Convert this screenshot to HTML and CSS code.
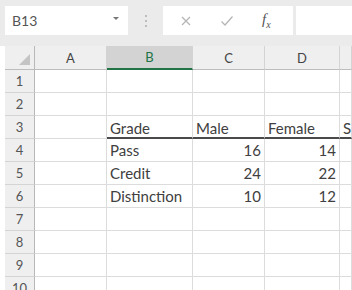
FILE: index.html
```html
<!DOCTYPE html>
<html lang="en">
<head>
  <meta charset="UTF-8" />
  <title>Grades</title>
  <link rel="stylesheet" href="styles.css">
</head>
<body>
  <div class="toolbar">
    <div class="name-box">
      <span>B13</span>
      <span class="arrow"></span>
    </div>
    <div class="grip"><i></i><i></i><i></i></div>
    <div class="fx-box">
      <svg class="ico" width="12" height="12" viewBox="0 0 12 12"><path d="M2 2 L10 10 M10 2 L2 10" stroke="#b4b4b4" stroke-width="1.2" fill="none"/></svg>
      <svg class="ico" width="14" height="12" viewBox="0 0 14 12"><path d="M1.5 6.5 L5 10 L12.5 1.5" stroke="#b4b4b4" stroke-width="1.2" fill="none"/></svg>
      <span class="fx">f<sub>x</sub></span>
    </div>
    <div class="formula"></div>
  </div>

  <div class="grid">
    <div class="corner"><span class="tri"></span></div>
    <div class="col">A</div>
    <div class="col sel">B</div>
    <div class="col">C</div>
    <div class="col">D</div>
    <div class="col"></div>

    <div class="row">1</div><div class="c"></div><div class="c"></div><div class="c"></div><div class="c"></div><div class="c"></div>
    <div class="row">2</div><div class="c"></div><div class="c"></div><div class="c"></div><div class="c"></div><div class="c"></div>
    <div class="row">3</div><div class="c"></div><div class="c head">Grade</div><div class="c head">Male</div><div class="c head">Female</div><div class="c head">Sum</div>
    <div class="row">4</div><div class="c"></div><div class="c">Pass</div><div class="c num">16</div><div class="c num">14</div><div class="c"></div>
    <div class="row">5</div><div class="c"></div><div class="c">Credit</div><div class="c num">24</div><div class="c num">22</div><div class="c"></div>
    <div class="row">6</div><div class="c"></div><div class="c">Distinction</div><div class="c num">10</div><div class="c num">12</div><div class="c"></div>
    <div class="row">7</div><div class="c"></div><div class="c"></div><div class="c"></div><div class="c"></div><div class="c"></div>
    <div class="row">8</div><div class="c"></div><div class="c"></div><div class="c"></div><div class="c"></div><div class="c"></div>
    <div class="row">9</div><div class="c"></div><div class="c"></div><div class="c"></div><div class="c"></div><div class="c"></div>
    <div class="row">10</div><div class="c"></div><div class="c"></div><div class="c"></div><div class="c"></div><div class="c"></div>
  </div>
</body>
</html>
```

FILE: styles.css
```css
* {
  margin: 0;
  padding: 0;
  box-sizing: border-box;
}

html, body {
  width: 352px;
  height: 290px;
  overflow: hidden;
  background: #ffffff;
  font-family: Lato, "Open Sans", sans-serif;
  color: #404040;
}

.toolbar {
  display: flex;
  align-items: stretch;
  height: 46px;
  padding: 6px 0 11px 5px;
  background: #ebebeb;
}

.name-box {
  width: 123px;
  background: #ffffff;
  display: flex;
  align-items: center;
  justify-content: space-between;
  padding: 0 9px 0 7px;
  font-size: 14px;
  color: #555;
}

.arrow {
  width: 0;
  height: 0;
  border-left: 3px solid transparent;
  border-right: 3px solid transparent;
  border-top: 3px solid #777;
  margin-bottom: 4px;
}

.grip {
  width: 35px;
  display: flex;
  flex-direction: column;
  align-items: center;
  justify-content: center;
  gap: 3px;
}

.grip i {
  width: 2px;
  height: 2px;
  background: #bdbdbd;
}

.fx-box {
  width: 130px;
  background: #ffffff;
  display: flex;
  align-items: center;
  padding-left: 17px;
  gap: 28px;
}

.fx {
  font-family: "Liberation Serif", serif;
  font-style: italic;
  font-size: 15px;
  color: #555;
}

.fx sub {
  font-size: 10px;
}

.formula {
  flex: 1;
  margin-left: 3px;
  background: #ffffff;
}

.grid {
  display: grid;
  grid-template-columns: 35px 72px 86px 72px 75px 12px;
  grid-auto-rows: 23px;
  grid-template-rows: 24px;
  font-size: 15px;
}

.corner, .col {
  background: #efefef;
  border-right: 1px solid #d4d4d4;
  border-bottom: 1px solid #bdbdbd;
}

.corner {
  position: relative;
  margin-left: 5px;
  border-right-color: #b8b8b8;
}

.tri {
  position: absolute;
  right: 4px;
  bottom: 4px;
  width: 0;
  height: 0;
  border-left: 11px solid transparent;
  border-bottom: 11px solid #c4c4c4;
}

.col {
  display: flex;
  align-items: center;
  justify-content: center;
  font-size: 13px;
  color: #444;
}

.col.sel {
  background: #d3d3d3;
  color: #217346;
  border-bottom: 2px solid #217346;
}

.row {
  margin-left: 5px;
  background: #efefef;
  border-right: 1px solid #b8b8b8;
  border-bottom: 1px solid #d4d4d4;
  display: flex;
  align-items: center;
  justify-content: center;
  font-size: 13px;
  color: #555;
}

.c {
  border-right: 1px solid #dcdcdc;
  border-bottom: 1px solid #dcdcdc;
  padding: 0 3px;
  display: flex;
  align-items: center;
  white-space: nowrap;
  overflow: hidden;
}

.c.head {
  border-bottom: 2px solid #4a4a4a;
  padding-top: 2px;
}

.c.num {
  justify-content: flex-end;
}
```
